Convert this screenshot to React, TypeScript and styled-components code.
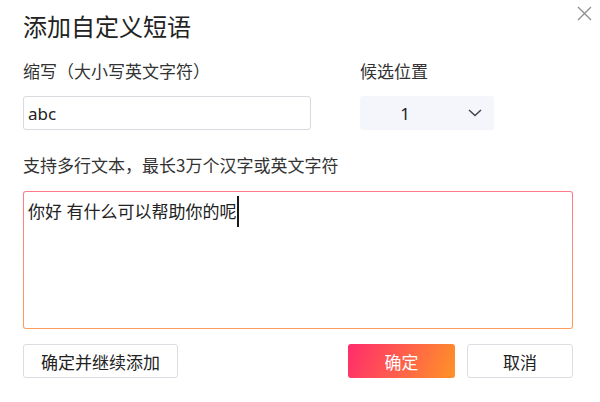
import React from "react";
import styled, { createGlobalStyle } from "styled-components";

const GlobalStyle = createGlobalStyle`
  html, body {
    margin: 0;
    padding: 0;
    background: #ffffff;
  }
  body {
    font-family: "Noto Sans", "Noto Sans CJK SC", sans-serif;
    color: #333333;
  }
`;

const Dialog = styled.div`
  width: 600px;
  height: 402px;
  box-sizing: border-box;
  padding: 6px 27px 0 23px;
  background: #ffffff;
`;

const Header = styled.div`
  display: flex;
  justify-content: space-between;
  align-items: flex-start;
`;

const Title = styled.h1`
  margin: 5px 0 0;
  font-size: 24px;
  line-height: 32px;
  font-weight: 400;
  color: #222222;
`;

const Close = styled.button`
  width: 15px;
  height: 15px;
  margin-right: -19px;
  padding: 0;
  border: none;
  background: none;
  cursor: pointer;
  display: flex;
`;

const FieldRow = styled.div`
  display: grid;
  grid-template-columns: 288px 134px;
  column-gap: 49px;
  margin-top: 16px;
`;

const Field = styled.div`
  display: flex;
  flex-direction: column;
`;

const Label = styled.label<{ $top?: number; $bottom?: number }>`
  display: block;
  margin-top: ${(p) => p.$top ?? 0}px;
  margin-bottom: ${(p) => p.$bottom ?? 13}px;
  font-family: "Noto Sans CJK SC", sans-serif;
  font-size: 17px;
  line-height: 24px;
  color: #333333;
  white-space: nowrap;
`;

const Input = styled.input`
  box-sizing: border-box;
  width: 100%;
  height: 34px;
  padding: 0 4px;
  border: 1px solid #d9d9df;
  border-radius: 3px;
  font-family: "Noto Sans", "Noto Sans CJK SC", sans-serif;
  font-size: 17px;
  color: #222222;
  outline: none;
`;

const Select = styled.div`
  box-sizing: border-box;
  height: 34px;
  display: flex;
  align-items: center;
  padding-right: 12px;
  border-radius: 3px;
  background: #f4f6fb;
  cursor: pointer;
`;

const SelectValue = styled.span`
  width: 90px;
  text-align: center;
  font-size: 17px;
  color: #222222;
`;

const Chevron = styled.svg`
  margin-left: auto;
`;

const TextBox = styled.div`
  box-sizing: border-box;
  height: 138px;
  padding: 4px 4px;
  border: 1.5px solid transparent;
  border-radius: 3px;
  background: linear-gradient(#ffffff, #ffffff) padding-box,
    linear-gradient(180deg, #ff7a88, #ff9d5e) border-box;
  font-size: 17px;
  line-height: 31px;
  color: #222222;
`;

const Caret = styled.span`
  display: inline-block;
  width: 2px;
  height: 31px;
  margin-left: 1px;
  vertical-align: top;
  background: #1a1a1a;
`;

const Footer = styled.div`
  display: flex;
  align-items: center;
  gap: 12px;
  margin-top: 15px;
`;

const Button = styled.button<{ $width: number; $primary?: boolean }>`
  box-sizing: border-box;
  width: ${(p) => p.$width}px;
  height: 34px;
  padding: 0;
  border: ${(p) => (p.$primary ? "none" : "1px solid #dcdde3")};
  border-radius: 3px;
  background: ${(p) =>
    p.$primary ? "linear-gradient(112deg, #ff2c6b 0%, #ff5a4f 45%, #ff9327 100%)" : "#ffffff"};
  color: ${(p) => (p.$primary ? "#ffffff" : "#222222")};
  font-family: "Noto Sans", "Noto Sans CJK SC", sans-serif;
  font-size: 17px;
  cursor: pointer;
`;

const Spacer = styled.div`
  flex: 1;
`;

export default function App() {
  return (
    <>
      <GlobalStyle />
      <Dialog>
        <Header>
          <Title>添加自定义短语</Title>
          <Close aria-label="关闭">
            <svg width="15" height="15" viewBox="0 0 15 15">
              <path d="M1 1L14 14M14 1L1 14" stroke="#8c8c8c" strokeWidth="1.3" fill="none" />
            </svg>
          </Close>
        </Header>
        <FieldRow>
          <Field>
            <Label>缩写（大小写英文字符）</Label>
            <Input defaultValue="abc" />
          </Field>
          <Field>
            <Label>候选位置</Label>
            <Select>
              <SelectValue>1</SelectValue>
              <Chevron width="14" height="8" viewBox="0 0 14 8">
                <polyline points="1,1 7,6.5 13,1" stroke="#444" strokeWidth="1.5" fill="none" />
              </Chevron>
            </Select>
          </Field>
        </FieldRow>
        <Label $top={23} $bottom={14}>
          支持多行文本，最长3万个汉字或英文字符
        </Label>
        <TextBox>
          你好 有什么可以帮助你的呢
          <Caret />
        </TextBox>
        <Footer>
          <Button $width={155}>确定并继续添加</Button>
          <Spacer />
          <Button $width={107} $primary>
            确定
          </Button>
          <Button $width={106}>取消</Button>
        </Footer>
      </Dialog>
    </>
  );
}
